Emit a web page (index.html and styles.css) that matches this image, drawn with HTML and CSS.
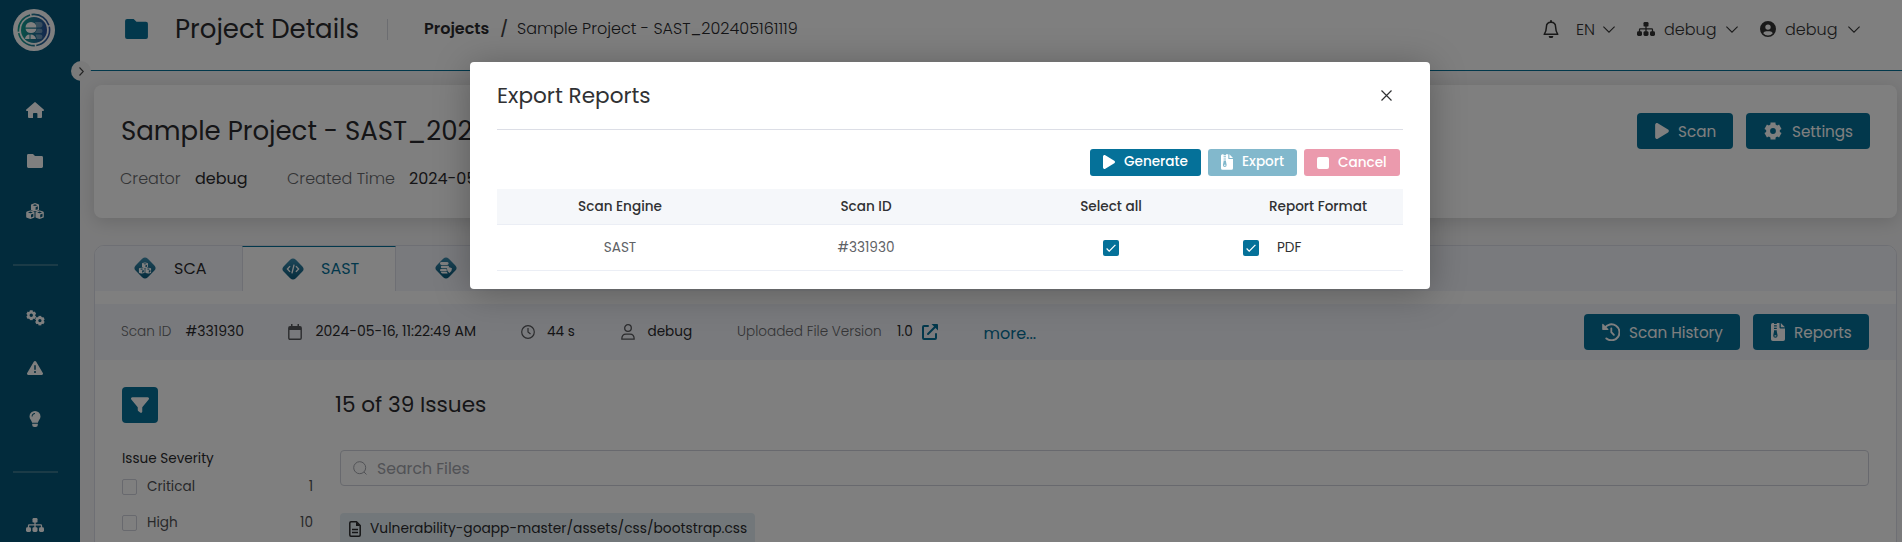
FILE: index.html
```html
<!DOCTYPE html>
<html lang="en">
<head>
<meta charset="utf-8">
<title>Project Details</title>
<link rel="stylesheet" href="styles.css">
</head>
<body>
<svg class="defs" aria-hidden="true">
  <defs>
    <linearGradient id="teal" x1="0" y1="0" x2="1" y2="0"><stop offset="0" stop-color="#12a08f"/><stop offset="1" stop-color="#2b4f9c"/></linearGradient>
    <linearGradient id="tabfill" x1="0" y1="0" x2="1" y2="1"><stop offset="0" stop-color="#4292b4"/><stop offset="1" stop-color="#045577"/></linearGradient>
    <symbol id="home" viewBox="0 0 18 16"><path d="M8.3.4a1 1 0 0 1 1.4 0l8 7.2c.6.6.2 1.4-.6 1.4H16v6a1 1 0 0 1-1 1h-3.6v-4.200a.8.8 0 0 0-.8-.8H7.800a.8.8 0 0 0-.8.8V16H3a1 1 0 0 1-1-1V9H.9C.1 9-.3 8.200.3 7.600z"/></symbol>
    <symbol id="folder" viewBox="0 0 16 14"><path d="M1.400 0H6l2 2h6.600A1.400 1.400 0 0 1 16 3.400v9.200a1.400 1.400 0 0 1-1.400 1.400H1.400A1.400 1.400 0 0 1 0 12.600V1.400A1.400 1.400 0 0 1 1.400 0z"/></symbol>
    <symbol id="cube" viewBox="0 0 10 10"><path fill-rule="evenodd" d="M5 0l4 1.400q.8.3.8 1.200v4.800q0 .9-.8 1.200L5 10 1 8.600Q.2 8.300.2 7.400V2.600Q.2 1.700 1 1.400zM5 1.500L2.200 2.500 5 3.500l2.800-1zM5.700 4.800v3.400l2.600-.9V3.900z"/></symbol>
    <symbol id="cubes" viewBox="0 0 18 16"><use href="#cube" x="4.700" y="0" width="8.600" height="8.600"/><use href="#cube" x="0" y="7.200" width="8.800" height="8.800"/><use href="#cube" x="9.200" y="7.200" width="8.800" height="8.800"/></symbol>
    <symbol id="gear" viewBox="0 0 18 18"><g fill="none" stroke="currentColor"><circle cx="9" cy="9" r="4.900" stroke-width="4"/><path stroke-width="5" d="M9 4V.5M9 14v3.500M4.700 6.500L1.700 4.800M13.300 11.500l3 1.700M13.300 6.500l3-1.700M4.700 11.500l-3 1.700"/></g></symbol>
    <symbol id="cogs" viewBox="0 0 19 16"><use href="#gear" x="0" y="0" width="10.500" height="10.500"/><use href="#gear" x="8.800" y="5.500" width="10.200" height="10.200"/></symbol>
    <symbol id="warn" viewBox="0 32 512 448"><path d="M256 32c14.200 0 27.300 7.500 34.500 19.800l216 368c7.300 12.400 7.300 27.700.2 40.100S486.300 480 472 480H40c-14.300 0-27.600-7.700-34.700-20.100s-7-27.800.2-40.100l216-368C228.700 39.500 241.800 32 256 32zm0 128c-13.300 0-24 10.700-24 24V296c0 13.300 10.700 24 24 24s24-10.700 24-24V184c0-13.300-10.700-24-24-24zm32 224a32 32 0 1 0-64 0 32 32 0 1 0 64 0z"/></symbol>
    <symbol id="bulb" viewBox="0 0 12 16"><path fill-rule="evenodd" d="M6 0a5.500 5.500 0 0 1 5.500 5.500c0 2.500-2 3.700-2.600 6.300H3.100C2.500 9.200.5 8 .5 5.500A5.500 5.500 0 0 1 6 0zM2.600 5.400h1c0-1.400 1-2.300 2.400-2.300v-1c-2 0-3.400 1.300-3.400 3.300zM3.200 12.700h5.600v1.200A2.100 2.100 0 0 1 6.700 16H5.300a2.100 2.100 0 0 1-2.100-2.100z"/></symbol>
    <symbol id="sitemap" viewBox="0 0 18 14"><rect x="6.500" y="0" width="5" height="4.600" rx="1.200"/><rect x="0" y="9.200" width="5" height="4.800" rx="1.400"/><rect x="6.500" y="9.200" width="5" height="4.800" rx="1.400"/><rect x="13" y="9.200" width="5" height="4.800" rx="1.400"/><path fill="none" stroke="currentColor" stroke-width="1.300" d="M9 4v6M2.500 10V7.700q0-.8.800-.8h11.400q.8 0 .8.800V10"/></symbol>
    <symbol id="bell" viewBox="0 0 16 18"><path fill="none" stroke="currentColor" stroke-width="1.500" stroke-linejoin="round" d="M8 2.200c-3 0-4.600 2-4.600 4.800 0 4-.8 5.200-2.200 7.300h13.600c-1.400-2.100-2.200-3.300-2.200-7.300C12.600 4.200 11 2.200 8 2.200z"/><rect x="7" y="0" width="2" height="2.500" rx="1"/><path d="M5.800 16h4.400v.4a1.500 1.500 0 0 1-1.500 1.500H7.300a1.500 1.500 0 0 1-1.500-1.500z"/></symbol>
    <symbol id="chev" viewBox="0 0 12 7"><path fill="none" stroke="currentColor" stroke-width="1.100" d="M.4.600L6 6.200 11.600.600"/></symbol>
    <symbol id="account" viewBox="0 0 16 16"><path fill-rule="evenodd" d="M8 0a8 8 0 1 1 0 16A8 8 0 0 1 8 0zm0 3.400a2.700 2.700 0 1 0 0 5.400 2.700 2.700 0 0 0 0-5.400zM3.200 12.200a6.200 6.200 0 0 0 9.600 0c-.6-1.300-1.700-2-3.200-2H6.400c-1.500 0-2.600.7-3.200 2z"/></symbol>
    <symbol id="play" viewBox="0 32 384 448"><path d="M73 39c-14.800-9.100-33.400-9.400-48.500-.9S0 62.600 0 80V432c0 17.400 9.400 33.400 24.500 41.900s33.700 8.100 48.500-.9L361 297c14.300-8.700 23-24.200 23-41s-8.700-32.200-23-41L73 39z"/></symbol>
    <symbol id="zip" viewBox="0 0 14 18"><path fill-rule="evenodd" d="M1.800 0H3v1h2.800V0H8.500v4.500q0 1 1 1H14v10.700a1.800 1.800 0 0 1-1.800 1.800H1.800A1.800 1.800 0 0 1 0 16.200V1.800A1.800 1.800 0 0 1 1.800 0zM3 2.300v1.200h2.800V2.300zM3 4.800V6h2.800V4.800zM3 7.300v1.200L2.200 12.600a2.200 2.200 0 1 0 4.400 0L5.800 8.500V7.300zM3.500 12.200h1.800v1.300H3.500zM9.800 0L14 4.300H9.800z"/></symbol>
    <symbol id="history" viewBox="0 0 18 18"><g fill="none" stroke="currentColor"><path stroke-width="2" d="M2.700 5A8 8 0 1 1 4.400 15.500" stroke-linecap="round"/><path stroke-width="1.800" stroke-linecap="round" d="M9.300 5.300v3.900l2.600 2.700"/></g><path d="M.2 1.200L.2 6.300q0 .6.600.6H6q.9-.1.300-.8L1.200.900Q.4.400.2 1.200z"/></symbol>
    <symbol id="filter" viewBox="0 32 512 448"><path d="M3.900 54.900C10.500 40.900 24.500 32 40 32H472c15.500 0 29.500 8.900 36.100 22.900s4.600 30.500-5.200 42.500L320 320.900V448c0 12.100-6.800 23.200-17.700 28.600s-23.800 4.300-33.500-3l-64-48c-8.100-6-12.800-15.500-12.800-25.600V320.900L9 97.300C-.7 85.400-2.800 68.800 3.900 54.900z"/></symbol>
    <symbol id="cal" viewBox="0 0 14 16"><path fill="none" stroke="currentColor" stroke-width="1.400" d="M2 2.800h10q1.200 0 1.200 1.200v10q0 1.200-1.200 1.200H2Q.8 15.200.8 14V4Q.8 2.800 2 2.800z"/><path d="M1 3h12v3H1zM3 0h1.500v3H3zM9.500 0H11v3H9.500z"/></symbol>
    <symbol id="clock" viewBox="0 0 14 14"><g fill="none" stroke="currentColor" stroke-width="1.200"><circle cx="7" cy="7" r="6.300"/><path d="M7 3v4l2.500 2"/></g></symbol>
    <symbol id="person" viewBox="0 0 14 16"><g fill="none" stroke="currentColor" stroke-width="1.300"><circle cx="7" cy="4" r="3.300"/><path stroke-linejoin="round" d="M.8 15.200c0-3.600 1.600-5 4.200-5h4c2.600 0 4.200 1.400 4.200 5z"/></g></symbol>
    <symbol id="ext" viewBox="0 0 16 16"><g fill="none" stroke="currentColor" stroke-width="2"><path stroke-linecap="round" stroke-linejoin="round" d="M6 2H2q-1 0-1 1v11q0 1 1 1h11q1 0 1-1v-4M6 10L13.500 2.500"/></g><path d="M9.500 0H15.200q.8 0 .8.8V6.500z"/></symbol>
    <symbol id="doc" viewBox="0 0 12 16"><g fill="none" stroke="currentColor" stroke-width="1.500"><path stroke-linejoin="round" d="M2 .8h5.500l3.700 3.700V14q0 1.200-1.200 1.200H2Q.8 15.200.8 14V2Q.8.800 2 .800z"/><path stroke-width="1.300" d="M3 8.500h6M3 11.500h6"/></g><path d="M7 .8V5h4.200z"/></symbol>
    <symbol id="code" viewBox="0 0 16 12"><path fill="none" stroke="currentColor" stroke-width="1.600" d="M4.500 2.500L1.300 6l3.200 3.500M11.500 2.500L14.700 6l-3.200 3.500M9.300.8L6.700 11.200"/></symbol>
    <symbol id="db" viewBox="0 0 14 14"><rect x="0" y="0" width="10" height="3.400" rx="1.700"/><rect x="1" y="4.300" width="9.500" height="3" rx="1.200"/><rect x="0" y="8.200" width="8" height="2.600" rx="1.200"/><path d="M1 11.500h7l1 2H3q-2 0-2-2zM11 6l3 1.200q0 4-3 5.600-3-1.600-3-5.600z"/></symbol>
    <symbol id="check" viewBox="0 0 10 8"><path fill="none" stroke="currentColor" stroke-width="1.200" d="M.6 4.500l2.600 2.700L9.400.8"/></symbol>
    <symbol id="times" viewBox="0 0 11 11"><path fill="none" stroke="currentColor" stroke-width="1.200" d="M.5.500l10 10M10.500.500l-10 10"/></symbol>
    <symbol id="lens" viewBox="0 0 14 14"><g fill="none" stroke="currentColor" stroke-width="1"><circle cx="6.700" cy="6.700" r="6"/><path d="M11 11l2.500 2.500"/></g></symbol>
  </defs>
</svg>

<div class="app">
  <nav class="sidebar">
    <div class="logo">
      <svg width="34" height="34" viewBox="0 0 34 34">
        <circle cx="17" cy="17" r="15.600" fill="none" stroke="url(#teal)" stroke-width="1.600" stroke-dasharray="22 1.500"/>
        <circle cx="17" cy="17" r="13" fill="url(#teal)"/>
        <path fill="#fff" d="M8.500 14.500a5.500 5.500 0 0 1 11 0zM8.500 15.700h11c-.4 2.600-2.500 4.400-5.500 4.400s-5.100-1.800-5.500-4.400zM8 26c.4-3 2-4.500 4.500-4.500V26zM13.500 26v-4.500c3 0 5 1.500 5.500 4.500z"/>
        <path fill="#fff" fill-opacity=".35" d="M18 9h5q2.500 0 2.500 2.700t-2.500 2.800h-3zM20.500 15.700H23q2.500 0 2.500 2.200T23 20.100h-5zM18.500 21.500H23q2.500 0 2.500 2.300T23 26h-3z"/>
      </svg>
    </div>
    <a class="nav"><svg width="18" height="16"><use href="#home"/></svg></a>
    <a class="nav"><svg width="16" height="14"><use href="#folder"/></svg></a>
    <a class="nav"><svg width="18" height="16"><use href="#cubes"/></svg></a>
    <hr class="rule">
    <a class="nav"><svg width="19" height="16"><use href="#cogs"/></svg></a>
    <a class="nav"><svg width="16" height="14"><use href="#warn"/></svg></a>
    <a class="nav"><svg width="12" height="16"><use href="#bulb"/></svg></a>
    <hr class="rule">
    <a class="nav"><svg width="18" height="14"><use href="#sitemap"/></svg></a>
    <span class="toggle"><svg width="5" height="9" viewBox="0 0 5 9"><path fill="none" stroke="currentColor" stroke-width="1.100" d="M.5.500L4.300 4.500.5 8.500"/></svg></span>
  </nav>

  <div class="main">
    <header class="topbar">
      <svg class="title-icon" width="23" height="20"><use href="#folder"/></svg>
      <h1 class="page-title">Project Details</h1>
      <span class="vline"></span>
      <div class="crumbs">
        <b class="crumb-root">Projects</b>
        <span class="crumb-sep">/</span>
        <span class="crumb-leaf">Sample Project - SAST_202405161119</span>
      </div>
      <div class="tools">
        <svg width="16" height="18"><use href="#bell"/></svg>
        <span class="who">EN</span>
        <svg width="12" height="7"><use href="#chev"/></svg>
        <svg width="18" height="14"><use href="#sitemap"/></svg>
        <span class="who">debug</span>
        <svg width="12" height="7"><use href="#chev"/></svg>
        <svg width="16" height="16"><use href="#account"/></svg>
        <span class="who">debug</span>
        <svg width="12" height="7"><use href="#chev"/></svg>
      </div>
    </header>

    <section class="summary">
      <div>
        <h2 class="project-name">Sample Project - SAST_202405161119</h2>
        <div class="facts"><span class="muted">Creator</span><span class="val">debug</span><span class="muted time">Created Time</span><span>2024-05-16</span></div>
      </div>
      <div class="actions">
        <button class="btn scan"><svg width="14" height="16"><use href="#play"/></svg><span>Scan</span></button>
        <button class="btn settings"><svg width="18" height="18"><use href="#gear"/></svg><span>Settings</span></button>
      </div>
    </section>

    <section class="panel">
      <div class="tabs">
        <div class="tab first"><svg class="gem" width="24" height="24" viewBox="0 0 24 24"><rect x="3.500" y="3.500" width="17" height="17" rx="4" transform="rotate(45 12 12)" fill="url(#tabfill)"/><use href="#cubes" x="5.500" y="6" width="13" height="12"/></svg><span>SCA</span></div>
        <div class="tab active"><svg class="gem" width="24" height="24" viewBox="0 0 24 24"><rect x="3.500" y="3.500" width="17" height="17" rx="4" transform="rotate(45 12 12)" fill="url(#tabfill)"/><use href="#code" x="5" y="7" width="14" height="10"/></svg><span>SAST</span></div>
        <div class="tab last"><svg class="gem" width="24" height="24" viewBox="0 0 24 24"><rect x="3.500" y="3.500" width="17" height="17" rx="4" transform="rotate(45 12 12)" fill="url(#tabfill)"/><use href="#db" x="6" y="6" width="12" height="12"/></svg></div>
      </div>
      <div class="info">
        <div class="info-items">
          <span class="muted">Scan ID</span><span class="num">#331930</span>
          <svg width="14" height="16"><use href="#cal"/></svg><span class="num">2024-05-16, 11:22:49 AM</span>
          <svg width="14" height="14"><use href="#clock"/></svg><span>44 s</span>
          <svg width="14" height="16"><use href="#person"/></svg><span class="user">debug</span>
          <span class="muted">Uploaded File Version</span><span class="ver">1.0</span>
          <svg class="link" width="16" height="16"><use href="#ext"/></svg>
          <a class="more">more...</a>
        </div>
        <div class="actions">
          <button class="btn history"><svg width="18" height="18"><use href="#history"/></svg><span>Scan History</span></button>
          <button class="btn reports"><svg width="14" height="18"><use href="#zip"/></svg><span>Reports</span></button>
        </div>
      </div>
      <div class="body">
        <aside class="filters">
          <button class="filter-btn"><svg width="18" height="16"><use href="#filter"/></svg></button>
          <div class="group">Issue Severity</div>
          <label class="sev"><i class="box"></i><span>Critical</span><em>1</em></label>
          <label class="sev"><i class="box"></i><span>High</span><em>10</em></label>
        </aside>
        <div class="issues">
          <h3 class="count">15 of 39 Issues</h3>
          <div class="search"><svg width="14" height="14"><use href="#lens"/></svg><span>Search Files</span></div>
          <div class="file"><svg width="12" height="16"><use href="#doc"/></svg><span>Vulnerability-goapp-master/assets/css/bootstrap.css</span></div>
        </div>
      </div>
    </section>
  </div>
</div>

<div class="overlay">
  <div class="modal" role="dialog">
    <div class="modal-head"><h2>Export Reports</h2><svg width="11" height="11"><use href="#times"/></svg></div>
    <div class="modal-actions">
      <button class="mini generate"><svg width="12" height="14"><use href="#play"/></svg><span>Generate</span></button>
      <button class="mini export"><svg width="12" height="16"><use href="#zip"/></svg><span>Export</span></button>
      <button class="mini cancel"><i class="stop"></i><span>Cancel</span></button>
    </div>
    <div class="row thead"><span>Scan Engine</span><span>Scan ID</span><span>Select all</span><span>Report Format</span></div>
    <div class="row"><span>SAST</span><span class="id">#331930</span><span><i class="tick"><svg width="10" height="8"><use href="#check"/></svg></i></span><span class="format"><i class="tick"><svg width="10" height="8"><use href="#check"/></svg></i><b>PDF</b></span></div>
  </div>
</div>
</body>
</html>
```
FILE: styles.css
```css
* { box-sizing: border-box; }
body { margin: 0; height: 542px; overflow: hidden; position: relative; font-family: Poppins, Inter, sans-serif; font-size: 13.6px; color: #2b2b2e; background: #fff; }
h1, h2, h3 { margin: 0; font-weight: 400; white-space: nowrap; }
svg { display: block; flex: none; fill: currentColor; }
i, em { font-style: normal; }
span { white-space: nowrap; }
button { font: inherit; border: 0; padding: 0; }
.defs { position: absolute; width: 0; height: 0; }

.app { display: flex; height: 542px; overflow: hidden; }

.sidebar { position: relative; flex: none; width: 80px; background: #045678; color: #fff; padding: 9px 0 0; display: flex; flex-direction: column; }
.logo { flex: none; width: 42px; height: 42px; margin: 0 0 34px 13px; border-radius: 50%; background: #fff; display: grid; place-items: center; }
.nav { flex: none; width: 70px; height: 50.5px; display: grid; place-items: center; }
.rule { flex: none; width: 45px; height: 2px; margin: 27px 0 27px 13px; border: 0; background: #36778f; }
.toggle { position: absolute; left: 71px; top: 61px; width: 20px; height: 20px; border-radius: 50%; background: #f4f4f5; color: #444; display: grid; place-items: center; }

.main { flex: 1; min-width: 0; background: #f5f5f6; }
.topbar { height: 71px; background: #fff; border-bottom: 1px solid #047096; display: flex; align-items: center; padding: 0 42px 12px 45px; }
.title-icon { color: #057199; }
.page-title { width: 184px; margin-left: 27px; font-size: 26px; }
.vline { width: 1px; height: 21px; margin-left: 28px; background: #d8dae2; }
.crumbs { display: grid; grid-template-columns: 76px 17px auto; margin-left: 36px; padding-bottom: 2px; font-size: 16px; }
.crumb-root { font-weight: 600; }
.crumb-sep { color: #444; font-weight: 500; }
.crumb-leaf { font-weight: 300; }
.tools { margin-left: auto; display: grid; grid-template-columns: 33px 27px 34px 27px 62px 34px 25px 63px 12px; align-items: center; color: #333; }
.who { font-size: 16px; font-weight: 300; color: #333; }

.summary { height: 133px; margin: 14px 5px 0 14px; padding: 28px 27px 0; background: #fff; border-radius: 8px; box-shadow: 0 4px 18px rgba(0, 0, 0, .14); display: flex; justify-content: space-between; }
.project-name { margin-top: 1px; line-height: 34px; font-size: 26px; width: 500px; overflow: hidden; }
.facts { margin: 21px 0 0 -1px; display: grid; grid-template-columns: 75px 92px 122px 120px; font-size: 16px; line-height: 20px; }
.muted { color: #68696d; font-weight: 300; }
.actions { display: flex; gap: 13px; }
.btn { height: 36px; border-radius: 4px; background: #057199; color: #fff; display: flex; align-items: center; padding-left: 18px; font-size: 15.2px; }
.scan { width: 96px; gap: 9px; }
.settings { width: 124px; gap: 10px; }

.panel { margin: 27px 5px 0 14px; height: 340px; background: #fff; border: 1px solid #dcdfe8; border-radius: 10px 10px 0 0; overflow: hidden; }
.tabs { height: 45px; display: flex; background: #f3f5fa; }
.tab { width: 147px; height: 45px; padding-left: 38px; padding-bottom: 1px; display: flex; align-items: center; gap: 16px; font-size: 16px; }
.tab.first { gap: 17px; }
.tab.active { width: 154px; background: #fff; border: solid #dcdfe8; border-width: 1px 1px 0; border-top-color: #057199; color: #057199; }
.gem { color: #fff; }
.info { height: 56px; margin-top: 13px; padding: 0 27px 0 26px; background: #f3f5fa; display: flex; align-items: center; justify-content: space-between; }
.info-items { display: grid; grid-template-columns: 64.500px 102px 28px 205px 26.500px 73.500px 27px 89.500px 160px 25px 61.500px auto; align-items: center; padding-bottom: 1px; }
.info-items svg { color: #57585c; }
.info-items .link, .more { color: #057199; }
.num { font-size: 14px; }
.more { font-size: 16px; padding-top: 3px; }
.history { width: 156px; gap: 9px; }
.reports { width: 116px; gap: 9px; }

.body { display: flex; padding: 27px 27px 0 27px; }
.filters { flex: none; width: 191px; }
.filter-btn { width: 36px; height: 36px; border-radius: 4px; background: #057199; color: #fff; display: grid; place-items: center; }
.group { margin-top: 27px; margin-bottom: 1px; line-height: 18px; }
.sev { height: 36px; display: flex; align-items: center; color: #505155; }
.sev .box { width: 15px; height: 16px; margin-right: 10px; border: 1px solid #d0d3dc; border-radius: 2px; }
.sev em { margin-left: auto; }
.issues { flex: 1; min-width: 0; margin-left: 27px; }
.count { margin-left: -5px; line-height: 36px; font-size: 21.6px; }
.search { height: 36px; margin-top: 27px; padding-left: 12px; border: 1px solid #d0d3dc; border-radius: 4px; display: flex; align-items: center; gap: 10px; font-size: 15.7px; color: #a3a5ac; }
.file { width: 415px; height: 40px; margin-top: 27px; padding: 8px 0 0 9px; display: flex; gap: 9px; line-height: 16px; font-size: 13.8px; background: #e4eff4; border-radius: 4px; }

.overlay { position: absolute; inset: 0; background: rgba(0, 0, 0, .5); display: flex; justify-content: center; align-items: flex-start; padding-top: 62px; padding-right: 2px; }
.modal { width: 960px; height: 227px; padding: 0 27px; background: #fff; border-radius: 4px; box-shadow: 0 4px 36px rgba(0, 0, 0, .28); color: #303133; font-size: 13.6px; }
.modal-head { height: 68px; border-bottom: 1px solid #dcdee6; display: flex; align-items: center; justify-content: space-between; padding-right: 11px; }
.modal-head h2 { font-size: 21.6px; }
.modal-actions { display: flex; justify-content: flex-end; gap: 7px; margin: 19px 3px 13px; }
.mini { height: 27px; border-radius: 3px; background: #057199; color: #fff; display: flex; align-items: center; gap: 9px; padding-left: 13px; padding-bottom: 1px; font-size: 13.6px; font-weight: 500; }
.generate { width: 111px; }
.export { width: 89px; background: #82b8cc; }
.cancel { width: 96px; background: #eb9aad; padding-bottom: 0; }
.stop { width: 12px; height: 12px; border-radius: 2px; background: #fff; }
.row { height: 46px; display: grid; grid-template-columns: 246px 246px 244px 170px; align-items: center; justify-items: center; border-bottom: 1px solid #ebeef5; color: #606266; }
.thead { height: 36px; background: #f5f7fa; color: #303133; font-weight: 500; }
.tick { width: 16px; height: 16px; border-radius: 2px; background: #057199; color: #fff; display: grid; place-items: center; }
.format { justify-self: start; margin-left: 10px; display: flex; align-items: center; gap: 18px; }
.format b { font-weight: 400; color: #303133; }
```
